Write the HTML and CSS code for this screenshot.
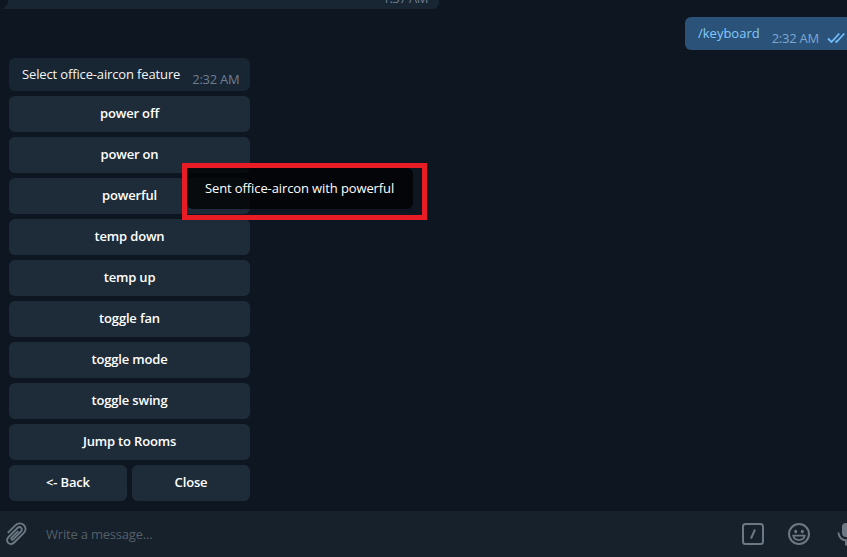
FILE: index.html
```html
<!DOCTYPE html>
<html lang="en">
<head>
<meta charset="utf-8">
<title>Chat</title>
<link rel="stylesheet" href="styles.css">
</head>
<body>
<div class="app">
  <main class="chat">
    <div class="previous">
      <svg class="tail" width="9" height="9" viewBox="0 0 9 9"><path d="M9 0H8.5C8 4 6 6.5 3 8.2Q2.6 9 4 9H9Z"/></svg>
      <div class="previous-bubble"><span class="time previous-time">1:37 AM</span></div>
    </div>
    <div class="bubble outgoing">
      <span class="text">/keyboard</span>
      <span class="time">2:32 AM</span>
      <svg class="checks" width="20" height="12" viewBox="0 0 20 12"><path d="M1 6.5L4.5 10L12.3 1.5M8.5 9L9.5 10L17.3 1.5"/></svg>
    </div>
    <div class="bot">
      <div class="bubble incoming">
        <span class="text">Select office-aircon feature</span>
        <span class="time">2:32 AM</span>
      </div>
      <div class="keyboard">
        <button class="key wide">power off</button>
        <button class="key wide">power on</button>
        <button class="key wide">powerful</button>
        <button class="key wide">temp down</button>
        <button class="key wide">temp up</button>
        <button class="key wide">toggle fan</button>
        <button class="key wide">toggle mode</button>
        <button class="key wide">toggle swing</button>
        <button class="key wide">Jump to Rooms</button>
        <button class="key">&lt;- Back</button>
        <button class="key">Close</button>
      </div>
    </div>
  </main>
  <footer class="composer">
    <svg class="icon clip" width="22" height="24" viewBox="0 0 22 24"><path d="M1.8 10.9L9.3 3.4C11.6 1.1 15 .7 17.5 2.7C20.2 5 20.2 8.5 17.9 10.8L8.2 20.5C6.3 22.4 3.8 22.4 2.2 20.8C.6 19.2.7 16.8 2.5 15L11.5 6C12.6 4.9 14.2 4.9 15.2 5.9C16.2 6.9 16.1 8.4 15 9.5L7.2 17.3C6.6 17.9 5.9 17.9 5.5 17.4C5 16.9 5.1 16.3 5.7 15.7L12.2 9.2"/></svg>
    <span class="placeholder">Write a message...</span>
    <svg class="icon" width="22" height="22" viewBox="0 0 22 22"><rect x="1" y="1" width="20" height="20" rx="2.5"/><path d="M13 6.5L9 15.5"/></svg>
    <svg class="icon smile" width="22" height="22" viewBox="0 0 22 22"><circle cx="11" cy="11" r="10"/><ellipse class="solid" cx="7.7" cy="8.6" rx="1.5" ry="1.8"/><ellipse class="solid" cx="14.3" cy="8.6" rx="1.5" ry="1.8"/><path class="mouth" d="M5.3 12.7H16.7C15.8 18.5 6.2 18.5 5.3 12.7Z"/></svg>
    <svg class="icon mic" width="18" height="24" viewBox="0 0 18 24"><rect class="solid" x="5" y="1" width="8" height="14" rx="4"/><path d="M1.5 10.5C1.5 20.7 16.5 20.7 16.5 10.5M9 18.2V23.5"/></svg>
  </footer>
  <div class="highlight"><div class="toast">Sent office-aircon with powerful</div></div>
</div>
</body>
</html>
```
FILE: styles.css
```css
* {
  box-sizing: border-box;
}

body {
  margin: 0;
  background: #0e1621;
  font: 13px/18px "Open Sans", "Noto Sans", sans-serif;
  color: #f5f5f5;
}

.app {
  position: relative;
  display: flex;
  flex-direction: column;
  width: 847px;
  height: 557px;
  overflow: hidden;
}

.chat {
  display: flex;
  flex: 1;
  flex-direction: column;
  gap: 8px;
}

.previous {
  display: flex;
  height: 9px;
}

.tail {
  fill: #182533;
}

.previous-bubble {
  display: flex;
  align-items: flex-end;
  justify-content: flex-end;
  width: 430px;
  padding-right: 11px;
  border-radius: 0 0 6px 0;
  background: #182533;
}

.bubble {
  display: flex;
  height: 33px;
  padding: 7px 0 0 13px;
  border-radius: 6px;
  white-space: nowrap;
}

.outgoing {
  align-self: flex-end;
  width: 162px;
  border-radius: 6px 0 0 6px;
  background: #2b5278;
}

.outgoing .text {
  color: #83caff;
}

.incoming .text {
  letter-spacing: -0.14px;
}

.time {
  color: #6d7f8f;
  letter-spacing: -0.27px;
}

.previous-time {
  margin-bottom: 2px;
  letter-spacing: -0.5px;
}

.bubble .time {
  margin: 5px 0 0 12px;
}

.outgoing .time {
  color: #7da8d3;
}

.checks {
  flex: none;
  margin: 8px 0 0 8px;
  fill: none;
  stroke: #72bcfd;
  stroke-width: 1.8;
}

.bot {
  display: flex;
  flex-direction: column;
  gap: 5px;
  width: 241px;
  margin-left: 9px;
}

.incoming {
  background: #182533;
}

.keyboard {
  display: grid;
  grid-template-columns: 1fr 1fr;
  gap: 5px;
}

.key {
  height: 36px;
  padding: 0 0 2px;
  border: 0;
  border-radius: 6px;
  background: #1e2c3a;
  color: #fff;
  font: 600 13px/18px "Open Sans", "Noto Sans", sans-serif;
  letter-spacing: -0.17px;
}

.wide {
  grid-column: span 2;
}

.composer {
  display: flex;
  flex: none;
  align-items: center;
  height: 46px;
  padding-left: 6px;
  background: #17212b;
}

.placeholder {
  flex: 1;
  margin-left: 18px;
  color: #545f6a;
  letter-spacing: -0.2px;
}

.icon {
  flex: none;
  fill: none;
  stroke: #6c7883;
  stroke-width: 2;
}

.clip {
  stroke-width: 1.9;
}

.smile {
  margin-left: 24px;
}

.mic {
  margin: 0 -8px 0 27px;
}

.solid {
  fill: #6c7883;
  stroke: none;
}

.mouth {
  stroke-width: 1.8;
}

.highlight {
  position: absolute;
  top: 163px;
  left: 182px;
  width: 245px;
  height: 57px;
  border: 5px solid #e81c24;
}

.toast {
  width: 226px;
  height: 41px;
  padding: 11px 18px;
  border-radius: 0 6px 6px 6px;
  background: rgba(0, 0, 0, 0.75);
  color: #fff;
  letter-spacing: -0.11px;
  white-space: nowrap;
}
```
